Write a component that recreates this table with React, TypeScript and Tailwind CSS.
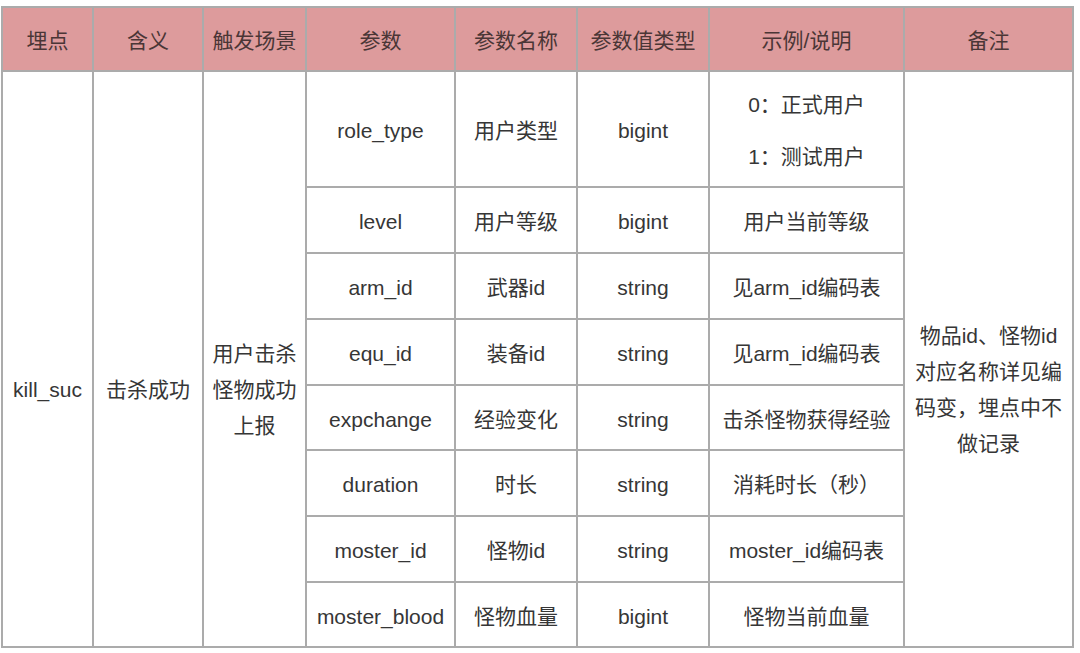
import React from "react";

const cols = [91, 110, 103, 149, 122, 132, 195, 169];

const params = [
  { key: "level", name: "用户等级", type: "bigint", note: "用户当前等级", h: "h-[66px]" },
  { key: "arm_id", name: "武器id", type: "string", note: "见arm_id编码表", h: "h-[66px]" },
  { key: "equ_id", name: "装备id", type: "string", note: "见arm_id编码表", h: "h-[66px]" },
  { key: "expchange", name: "经验变化", type: "string", note: "击杀怪物获得经验", h: "h-[65px]" },
  { key: "duration", name: "时长", type: "string", note: "消耗时长（秒）", h: "h-[66px]" },
  { key: "moster_id", name: "怪物id", type: "string", note: "moster_id编码表", h: "h-[66px]" },
  { key: "moster_blood", name: "怪物血量", type: "bigint", note: "怪物当前血量", h: "h-[65px]" },
];

const heads = ["埋点", "含义", "触发场景", "参数", "参数名称", "参数值类型", "示例/说明", "备注"];

const cell = "border-2 border-[#ababab] text-center align-middle p-0";
const plain = `${cell} pt-[4px]`;
// the merged cells sit a bit below the true middle in the original
const merged = `${cell} pt-[62px]`;

export default function App() {
  return (
    <div className="bg-white w-[1080px] h-[653px] pt-[6px] pl-[1px] text-[#363636] text-[21px] font-['Liberation_Sans','Noto_Sans_CJK_SC',sans-serif]">
      <table className="table-fixed border-collapse w-[1072px]">
        <colgroup>
          {cols.map((w, i) => (
            <col key={i} style={{ width: w }} />
          ))}
        </colgroup>
        <thead>
          <tr className="h-[64px] bg-[#dd9b9c]">
            {heads.map((h) => (
              <th key={h} className={`${plain} font-normal text-[#4a3636]`}>
                {h}
              </th>
            ))}
          </tr>
        </thead>
        <tbody>
          <tr className="h-[116px]">
            <td rowSpan={8} className={merged}>kill_suc</td>
            <td rowSpan={8} className={merged}>击杀成功</td>
            <td rowSpan={8} className={`${merged} leading-[36px]`}>
              用户击杀
              <br />
              怪物成功
              <br />
              上报
            </td>
            <td className={plain}>role_type</td>
            <td className={plain}>用户类型</td>
            <td className={plain}>bigint</td>
            <td className={plain}>
              <div className="flex flex-col items-center gap-[24px] leading-[28px]">
                <span>0：正式用户</span>
                <span>1：测试用户</span>
              </div>
            </td>
            <td rowSpan={8} className={`${merged} leading-[36px]`}>
              物品id、怪物id
              <br />
              对应名称详见编
              <br />
              码变，埋点中不
              <br />
              做记录
            </td>
          </tr>
          {params.map((p) => (
            <tr key={p.key} className={p.h}>
              <td className={plain}>{p.key}</td>
              <td className={plain}>{p.name}</td>
              <td className={plain}>{p.type}</td>
              <td className={plain}>{p.note}</td>
            </tr>
          ))}
        </tbody>
      </table>
    </div>
  );
}
